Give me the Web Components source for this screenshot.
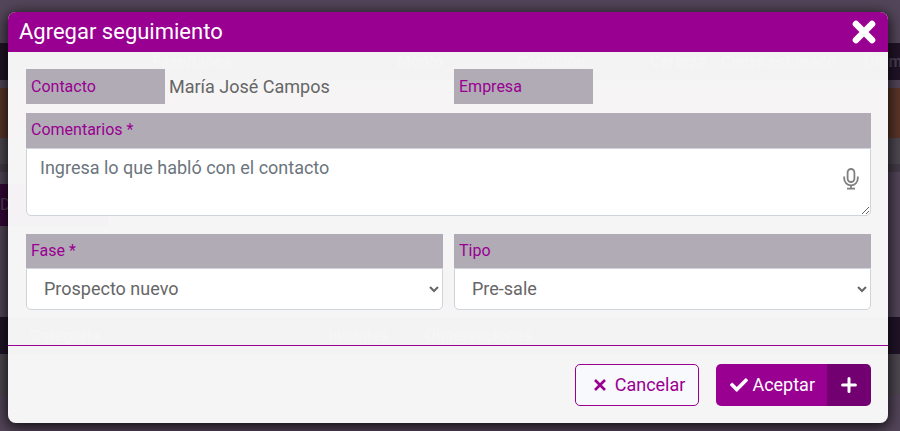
<!DOCTYPE html>
<html lang="es">
<head>
<meta charset="utf-8">
<meta name="viewport" content="width=device-width, initial-scale=1">
<title>Agregar seguimiento</title>
<style>
  :root { --brand: #990091; --brand-dark: #730070; --label-bg: #b1abb6; --ink: #666; --line: #ced4da; }
  html { height: 100%; }
  body { margin: 0; min-height: 100%; font: 18px/24px Roboto, sans-serif; color: var(--ink); background: #54465a; overflow: hidden; }
</style>
</head>
<body>
<follow-up-page></follow-up-page>
<script>
const define = (name, html, setup) => customElements.define(name, class extends HTMLElement {
  constructor() {
    super();
    this.attachShadow({ mode: 'open' }).innerHTML = html;
  }
  connectedCallback() { if (setup) setup(this, this.shadowRoot); }
});

const shapes = {
  close: '<svg viewBox="0 0 24 24"><path d="M4 4 20 20M20 4 4 20" fill="none" stroke="currentColor" stroke-width="6.6" stroke-linecap="round"/></svg>',
  cross: '<svg viewBox="0 0 12 12"><path d="M1 1 11 11M11 1 1 11" fill="none" stroke="currentColor" stroke-width="2.6"/></svg>',
  check: '<svg viewBox="0 0 512 512"><path fill="currentColor" d="M173.898 439.404l-166.4-166.4c-9.997-9.997-9.997-26.206 0-36.204l36.203-36.204c9.997-9.998 26.207-9.998 36.204 0L192 312.69 432.095 72.596c9.997-9.997 26.207-9.997 36.204 0l36.203 36.204c9.997 9.997 9.997 26.206 0 36.204l-294.4 294.401c-9.998 9.997-26.207 9.997-36.204-.001z"/></svg>',
  plus: '<svg viewBox="0 0 16 16"><path d="M8 1.6V14.4M1.6 8H14.4" fill="none" stroke="currentColor" stroke-width="3" stroke-linecap="round"/></svg>',
  mic: '<svg viewBox="0 0 16 22"><g fill="none" stroke="currentColor" stroke-width="1.8"><rect x="4.6" y="1" width="6.8" height="13" rx="3.4"/><path d="M1.2 8.5V10.5a6.8 6.8 0 0 0 13.6 0V8.5M8 17.3V20.5M4 20.6H12"/></g></svg>'
};
define('ui-icon', `<style>:host{display:block;flex:none}svg{display:block;width:100%;height:100%}</style><template></template>`,
  (el, root) => { root.querySelector('template').insertAdjacentHTML('afterend', shapes[el.getAttribute('name')]); });

define('page-backdrop', `
<style>
  :host { display: grid; grid-template-rows: 43px 37px 8px 50px 26px 8px 12px 42px 91px 37px 40px 1fr; position: absolute; inset: 0; overflow: hidden; background: #54465a; font-size: 16px; }
  .head { display: grid; align-items: center; background: #211428; color: #4c4052; font-weight: 700; white-space: nowrap; }
  .deals { grid-template-columns: 152fr 245fr 120fr 133fr 71fr 143fr 36fr; }
  .notes { grid-template-columns: 30fr 298fr 97fr 475fr; }
  .head span { min-width: 0; }
  .warm { background: #5b3629; }
  .purple { background: #360738; color: #554058; width: 12%; line-height: 42px; }
  .grey { background: #4f4851; }
  .low { background: #453c49; }
</style>
<div></div>
<div class="head deals"><span></span><span>Fase/Línea</span><span>Monto</span><span>Comisión</span><span>Certeza</span><span>Cierre estimado</span><span>Último</span></div>
<div></div><div class="warm"></div><div class="grey"></div>
<div class="low"></div><div></div><div class="purple">D</div><div></div>
<div class="head notes"><span></span><span>Categoría</span><span>Iniciales</span><span>Observaciones</span></div>
<div class="grey"></div><div></div>`);

define('modal-dialog', `
<style>
  :host { display: block; position: relative; margin: 12px 12px 8px 8px; border-radius: 8px; background: rgba(255,255,255,.95); box-shadow: 0 3px 14px 2px rgba(0,0,0,.75); }
  header { display: flex; align-items: center; justify-content: space-between; height: 40px; padding: 0 12px 0 11px; border-radius: 8px 8px 0 0; background: var(--brand); color: #fff; }
  h1 { margin: 0; font-size: 22px; line-height: 28px; font-weight: 400; }
  button { margin: 0; padding: 0; border: 0; background: none; color: inherit; }
  ui-icon { width: 24px; height: 24px; }
  main { padding: 17px 17px 35px 18px; }
  footer { display: flex; justify-content: flex-end; gap: 17px; padding: 18px 17px 17px; border-top: 1px solid var(--brand); }
</style>
<header><h1><slot name="title"></slot></h1><button type="button" aria-label="Cerrar"><ui-icon name="close"></ui-icon></button></header>
<main><slot></slot></main>
<footer><slot name="actions"></slot></footer>`,
  (el) => { el.setAttribute('role', 'dialog'); el.setAttribute('aria-modal', 'true'); });

define('info-pair', `
<style>
  :host { display: grid; grid-template-columns: minmax(0,1fr) minmax(0,2fr); align-items: center; }
  .name { background: var(--label-bg); color: var(--brand); font-size: 16px; line-height: 24px; padding: 6px 5px 5px; }
  .value { padding-left: 4px; }
</style>
<div class="name"><slot name="name"></slot></div><div class="value"><slot></slot></div>`);

const fieldStyle = `
  :host { display: block; min-width: 0; }
  label { display: block; background: var(--label-bg); color: var(--brand); font-size: 16px; line-height: 24px; padding: 5px; }
  textarea, select { display: block; box-sizing: border-box; width: 100%; margin: 0; border: 1px solid var(--line); border-radius: 0 0 5px 5px; background: #fff; color: var(--ink); font: inherit; }`;

define('text-area-field', `
<style>${fieldStyle}
  label { padding-bottom: 6px; }
  .box { position: relative; }
  textarea { height: 68px; padding: 7px 48px 7px 13px; resize: vertical; }
  textarea::placeholder { color: #6c757d; opacity: 1; }
  button { position: absolute; right: 12px; top: 20px; margin: 0; padding: 0; border: 0; background: none; color: #808080; }
  ui-icon { width: 16px; height: 22px; }
</style>
<label for="c"></label>
<div class="box"><textarea id="c" required></textarea><button type="button" aria-label="Dictar"><ui-icon name="mic"></ui-icon></button></div>`,
  (el, root) => {
    root.querySelector('label').textContent = el.getAttribute('label');
    root.querySelector('textarea').placeholder = el.getAttribute('placeholder');
  });

define('select-field', `
<style>${fieldStyle}
  select { height: 42px; padding: 0 0 2px 13px; }
</style>
<label for="c"></label><select id="c"></select>`,
  (el, root) => {
    root.querySelector('label').textContent = el.getAttribute('label');
    root.querySelector('select').add(new Option(el.getAttribute('value')));
  });

define('action-button', `
<style>
  :host { display: block; }
  button { display: flex; align-items: center; gap: 9px; box-sizing: border-box; height: 42px; margin: 0; padding: 0 13px 0 18px; border: 1px solid var(--brand); border-radius: 5px; background: #f8f9fc; color: var(--brand); font: inherit; }
  ui-icon { width: 12px; height: 12px; }
</style>
<button type="button"><ui-icon name="cross"></ui-icon><slot></slot></button>`);

define('split-button', `
<style>
  :host { display: flex; border-radius: 5px; overflow: hidden; }
  button { display: flex; align-items: center; justify-content: center; gap: 4px; height: 42px; margin: 0; border: 0; padding: 0 12px 0 14px; background: var(--brand); color: #fff; font: inherit; }
  .more { padding: 0 14px; background: var(--brand-dark); }
  .check { width: 18px; height: 18px; }
  .plus { width: 16px; height: 16px; }
</style>
<button type="button"><ui-icon class="check" name="check"></ui-icon><slot></slot></button>
<button type="button" class="more" aria-label="Aceptar y agregar otro"><ui-icon class="plus" name="plus"></ui-icon></button>`);

define('follow-up-page', `
<style>
  :host { display: block; }
  .row { display: grid; grid-template-columns: minmax(0,1fr) minmax(0,1fr); gap: 11px; }
  text-area-field { margin: 9px 0 18px; }
</style>
<page-backdrop aria-hidden="true"></page-backdrop>
<modal-dialog>
  <span slot="title">Agregar seguimiento</span>
  <div class="row">
    <info-pair><span slot="name">Contacto</span>María José Campos</info-pair>
    <info-pair><span slot="name">Empresa</span></info-pair>
  </div>
  <text-area-field label="Comentarios *" placeholder="Ingresa lo que habló con el contacto"></text-area-field>
  <div class="row">
    <select-field label="Fase *" value="Prospecto nuevo"></select-field>
    <select-field label="Tipo" value="Pre-sale"></select-field>
  </div>
  <action-button slot="actions">Cancelar</action-button>
  <split-button slot="actions">Aceptar</split-button>
</modal-dialog>`);
</script>
</body>
</html>
